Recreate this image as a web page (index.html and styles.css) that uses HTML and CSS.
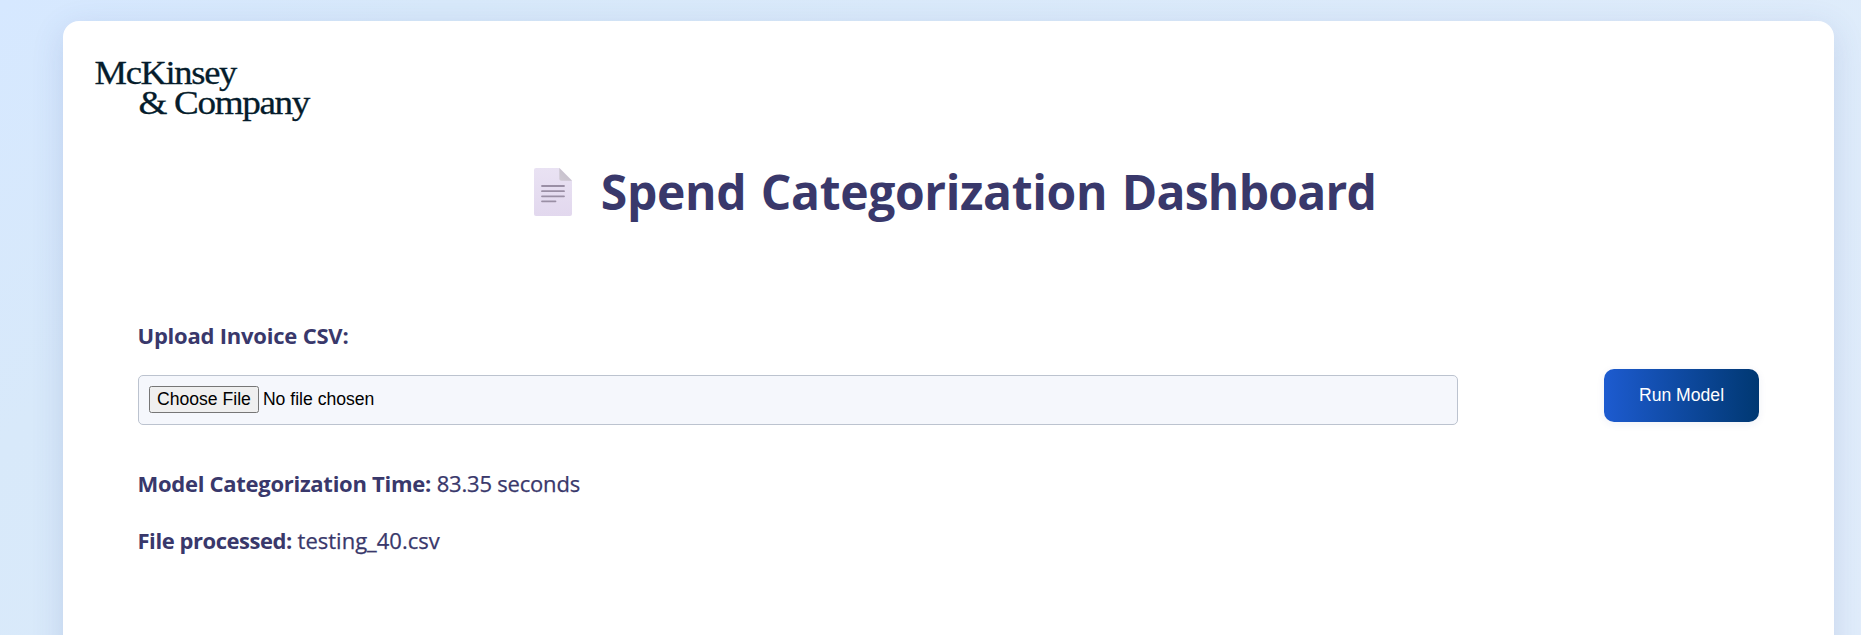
FILE: index.html
```html
<!DOCTYPE html>
<html lang="en">
<head>
<meta charset="utf-8">
<title>Spend Categorization Dashboard</title>
<link rel="stylesheet" href="styles.css">
</head>
<body>
<main class="card">
  <svg class="logo" width="240" height="70" viewBox="0 0 240 70" role="img" aria-label="McKinsey &amp; Company">
    <text x="-0.500" y="34" textLength="141.500" lengthAdjust="spacingAndGlyphs">McKinsey</text>
    <text x="43.500" y="63.500" textLength="170.500" lengthAdjust="spacingAndGlyphs">&amp; Company</text>
  </svg>
  <h1 class="title">
    <svg class="doc" width="38" height="48" viewBox="0 0 38 48" aria-hidden="true">
      <defs>
        <linearGradient id="page" x1="0" y1="0" x2="0" y2="1"><stop offset="0" stop-color="#e9e2f3"/><stop offset="1" stop-color="#e2d8ee"/></linearGradient>
        <linearGradient id="fold" x1="0" y1="1" x2="1" y2="0"><stop offset="0" stop-color="#cfc9d3"/><stop offset="1" stop-color="#c2bcc8"/></linearGradient>
      </defs>
      <path d="M2 0H25.500L38 12.500V46a2 2 0 0 1-2 2H2a2 2 0 0 1-2-2V2a2 2 0 0 1 2-2Z" fill="url(#page)"/>
      <path d="M25.300 0L38 12.700H27.300a2 2 0 0 1-2-2Z" fill="url(#fold)"/>
      <path d="M8 18H30M8 23.200H30M8 28.300H30M8 33.300H21.500" stroke="#9a8fa5" stroke-width="1.800" stroke-linecap="round"/>
    </svg>
    <span class="title-text">Spend Categorization <span class="title-end">Dashboard</span></span>
  </h1>
  <form class="upload">
    <div class="field">
      <label class="label" for="csv">Upload Invoice CSV:</label>
      <input class="file" id="csv" type="file">
    </div>
    <button class="run" type="button">Run Model</button>
  </form>
  <section class="results">
    <p class="line"><strong class="time-label">Model Categorization Time:</strong> <span class="time">83.35 seconds</span></p>
    <p class="line"><strong class="file-label">File processed:</strong> <span class="name">testing_40.csv</span></p>
  </section>
</main>
</body>
</html>
```
FILE: styles.css
```css
* { box-sizing: border-box; }
html { height: 100%; overflow: hidden; }
body {
  margin: 0;
  height: 100%;
  padding: 21px 27px 0 63px;
  overflow: hidden;
  background: linear-gradient(135deg, #d6e8ff 0%, #d8e9fa 18%, #e1edfb 100%);
  color: #39386b;
  font-family: "Segoe UI", "Open Sans", "Noto Sans", sans-serif;
}
.card {
  height: 800px;
  padding: 29px 75px 0;
  background: #fff;
  border-radius: 16px;
  box-shadow: 0 8px 32px rgba(60, 90, 160, 0.16);
}
.logo {
  display: block;
  overflow: visible;
  margin-left: -43px;
  fill: #051c2c;
  font: 33px "Liberation Serif", serif;
  letter-spacing: -1.2px;
  stroke: #051c2c;
  stroke-width: 0.3px;
}
.title {
  display: flex;
  justify-content: center;
  align-items: center;
  gap: 29px;
  height: 66px;
  margin: 39px 0 0 13px;
  font-size: 48px;
  line-height: 66px;
  font-weight: 700;
  white-space: nowrap;
}
.title-text { letter-spacing: -0.35px; word-spacing: 2.5px; }
.title-end { letter-spacing: -0.75px; }
.upload {
  display: flex;
  justify-content: space-between;
  align-items: flex-end;
  margin-top: 95px;
}
.field { display: flex; flex-direction: column; gap: 25px; }
.label {
  margin-left: -0.5px;
  font-size: 22px;
  line-height: 30px;
  font-weight: 700;
  letter-spacing: -0.22px;
}
.file {
  width: 1320px;
  height: 50px;
  padding: 10px;
  border: 1px solid #bcc3cf;
  border-radius: 5px;
  background: #f5f7fc;
  color: #000;
  font: 17.600px "Liberation Sans", Arial, sans-serif;
}
.run {
  width: 155px;
  height: 53px;
  margin-bottom: 3px;
  padding: 0;
  border: 0;
  border-radius: 10px;
  background: linear-gradient(90deg, #1d5bd0, #003872);
  box-shadow: 0 2px 8px rgba(30, 60, 140, 0.07);
  color: #fff;
  font: 17.600px "Liberation Sans", Arial, sans-serif;
}
.results { margin: 43px 0 0 -0.5px; }
.line { margin: 0 0 27px; font-size: 22px; line-height: 30px; }
.time-label { letter-spacing: -0.28px; }
.time { letter-spacing: -0.2px; }
.file-label { letter-spacing: -0.45px; }
.time, .name { -webkit-text-stroke: 0.25px currentColor; }
```
